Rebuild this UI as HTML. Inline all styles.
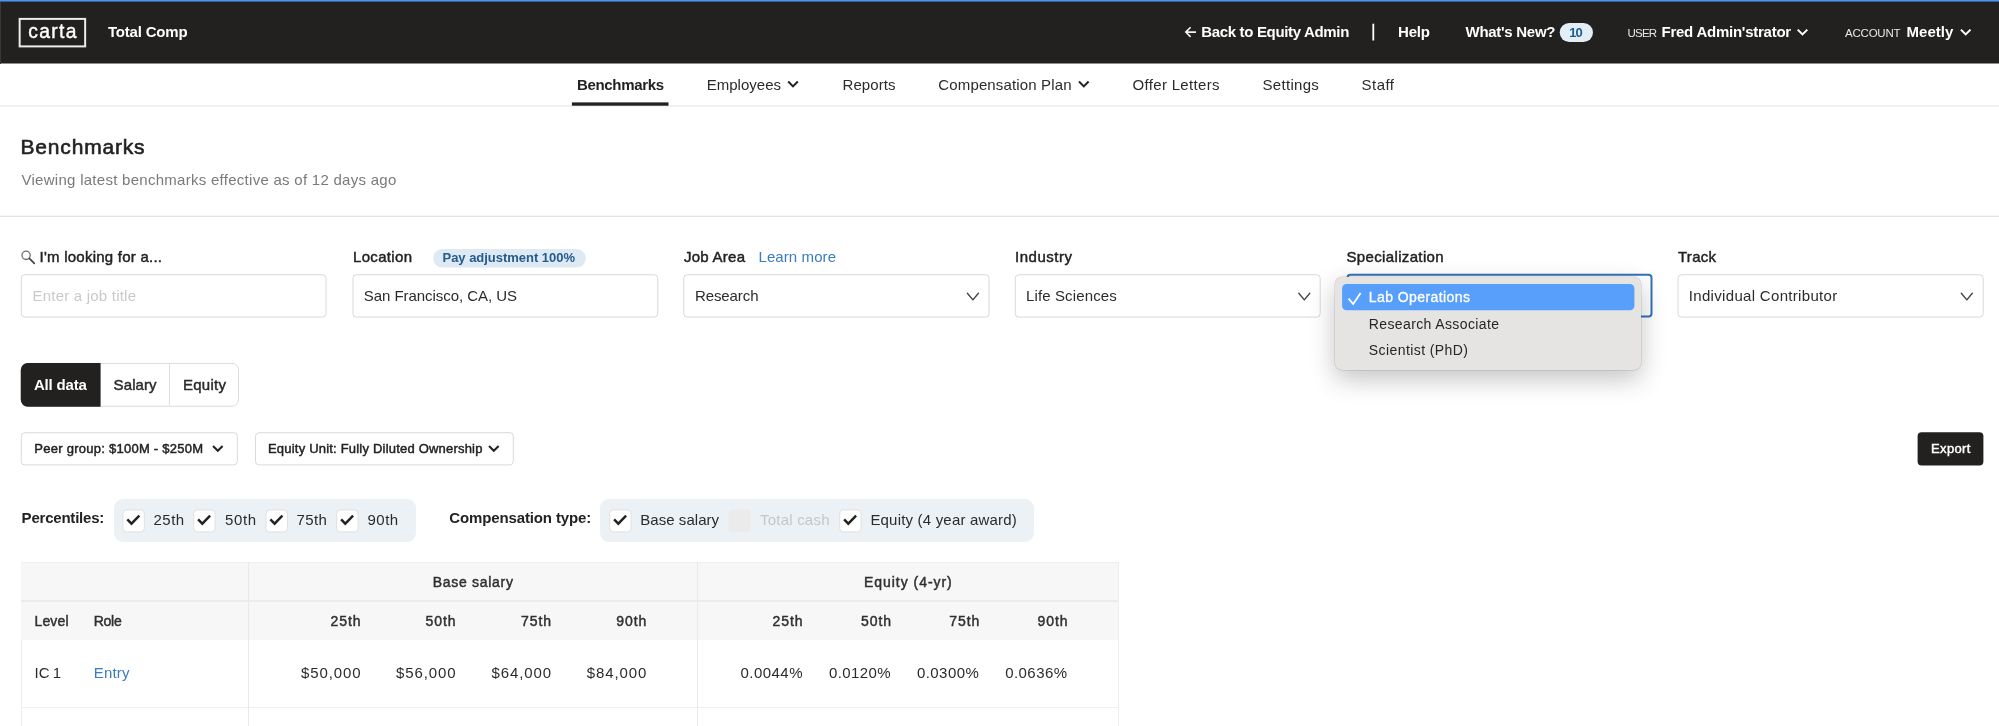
<!DOCTYPE html>
<html lang="en"><head><meta charset="utf-8"><title>Benchmarks - Total Comp</title>
<style>
html,body{margin:0;padding:0;background:#fff;}
body{width:1999px;height:726px;overflow:hidden;font-family:"Liberation Sans",sans-serif;}
#page{will-change:transform;position:relative;width:1999px;height:726px;overflow:hidden;background:#fff;}
.t{position:absolute;white-space:nowrap;margin:0;padding:0;}
.b{position:absolute;box-sizing:border-box;}
svg{position:absolute;overflow:visible;}

</style></head>
<body>
<div id="page">
<!-- top bar -->
<div class="b" style="left:0;top:0;width:1999px;height:63px;background:#222120;"></div>
<div class="b" style="left:0;top:63px;width:1999px;height:1px;background:#8f8e8e;"></div>
<div class="b" style="left:0;top:0;width:1999px;height:1px;background:#4a96ee;"></div>
<div class="b" style="left:0;top:1px;width:1999px;height:1px;background:#345f97;"></div>
<div class="b" style="left:0;top:2px;width:1px;height:62px;background:#3a3836;"></div>
<div class="b" style="left:0;top:105px;width:1999px;height:1px;background:#efefef;"></div>
<div class="b" style="left:0;top:106px;width:1999px;height:1px;background:#f3f3f3;"></div>
<div class="b" style="left:0;top:215px;width:1999px;height:1px;background:#f5f5f5;"></div>
<div class="b" style="left:0;top:216px;width:1999px;height:1px;background:#e4e4e4;"></div>
<div class="b" style="left:113.5px;top:499px;width:302px;height:42.5px;background:#ecf1f6;border-radius:9px;"></div>
<div class="b" style="left:600px;top:499px;width:434.3px;height:42.5px;background:#ecf1f6;border-radius:9px;"></div>
<div class="b" style="left:21px;top:562px;width:1097.5px;height:78px;background:#f7f7f7;border-top:1px solid #efefef;"></div>
<div class="b" style="left:21px;top:600px;width:1097.5px;height:2px;background:#ebebeb;"></div>
<div class="b" style="left:21px;top:706.5px;width:1097.5px;height:1px;background:#f0f0f0;"></div>
<div class="b" style="left:20.5px;top:640px;width:1px;height:86px;background:#efefef;"></div>
<div class="b" style="left:248px;top:562px;width:1px;height:164px;background:#e9e9e9;"></div>
<div class="b" style="left:697px;top:562px;width:1px;height:164px;background:#e9e9e9;"></div>
<div class="b" style="left:1118px;top:562px;width:1px;height:164px;background:#eeeeee;"></div>
<svg style="left:0;top:0;" width="1999" height="726" viewBox="0 0 1999 726">
<rect x="19.65" y="18.90" width="65.50" height="27.50" rx="0" fill="none" stroke="#ececec" stroke-width="2"/>
<rect x="1372.4" y="23.7" width="1.8" height="16.8" fill="#fff"/>
<rect x="1559.7" y="23" width="33.3" height="19" rx="9.5" fill="#e3eef6"/>
<rect x="433.25" y="249" width="152.5" height="18.6" rx="9.3" fill="#deeaf3"/>
<rect x="571.9" y="102.4" width="96.6" height="3.3" fill="#222120"/>
<rect x="21.25" y="274.75" width="304.75" height="42.35" rx="3.5" fill="#fff" stroke="#d8d8d8" stroke-width="1"/>
<rect x="353.00" y="274.75" width="304.75" height="42.35" rx="3.5" fill="#fff" stroke="#d8d8d8" stroke-width="1"/>
<rect x="683.75" y="274.75" width="305.25" height="42.35" rx="3.5" fill="#fff" stroke="#d8d8d8" stroke-width="1"/>
<rect x="1015.25" y="274.75" width="304.95" height="42.35" rx="3.5" fill="#fff" stroke="#d8d8d8" stroke-width="1"/>
<rect x="1678.00" y="274.75" width="305.20" height="42.35" rx="3.5" fill="#fff" stroke="#d8d8d8" stroke-width="1"/>
<rect x="1347.50" y="274.80" width="304.00" height="41.80" rx="3" fill="#fff" stroke="#3472ba" stroke-width="2"/>
<rect x="21.25" y="363.40" width="217.25" height="42.85" rx="6.5" fill="#fff" stroke="#dcdcdc" stroke-width="1"/>
<path d="M100.6,362.9 L27.75,362.9 A7,7 0 0 0 20.75,369.9 L20.75,399.75 A7,7 0 0 0 27.75,406.75 L100.6,406.75 Z" fill="#222120"/>
<rect x="169.05" y="363.9" width="1" height="41.85" fill="#dedede"/>
<rect x="21.25" y="432.70" width="216.05" height="32.20" rx="3.5" fill="#fff" stroke="#dadada" stroke-width="1"/>
<rect x="255.50" y="432.70" width="257.80" height="32.20" rx="3.5" fill="#fff" stroke="#dadada" stroke-width="1"/>
<rect x="1917.6" y="432.2" width="65.8" height="33.3" rx="4" fill="#222120"/>
<rect x="122.90" y="510.00" width="21.40" height="21.90" rx="3.5" fill="#fff" stroke="#e0e0e0" stroke-width="1"/>
<rect x="193.70" y="510.00" width="21.40" height="21.90" rx="3.5" fill="#fff" stroke="#e0e0e0" stroke-width="1"/>
<rect x="266.00" y="510.00" width="21.40" height="21.90" rx="3.5" fill="#fff" stroke="#e0e0e0" stroke-width="1"/>
<rect x="336.70" y="510.00" width="21.40" height="21.90" rx="3.5" fill="#fff" stroke="#e0e0e0" stroke-width="1"/>
<rect x="609.70" y="510.00" width="21.40" height="21.90" rx="3.5" fill="#fff" stroke="#e0e0e0" stroke-width="1"/>
<rect x="839.70" y="510.00" width="21.40" height="21.90" rx="3.5" fill="#fff" stroke="#e0e0e0" stroke-width="1"/>
<rect x="728.4" y="509.5" width="22.2" height="22.9" rx="4" fill="#ebebeb"/>
</svg>
<div class="b" style="left:1334.7px;top:276.6px;width:306.7px;height:93.6px;background:#e5e4e3;border-radius:7px;box-shadow:0 0 0 0.5px rgba(0,0,0,0.16),0 9px 26px rgba(0,0,0,0.24);z-index:10;"></div>
<svg style="left:0;top:0;z-index:11;" width="1999" height="726"><rect x="1342.1" y="283.9" width="292.3" height="26.4" rx="4.5" fill="#579ffb"/></svg>
<svg style="left:0;top:0;" width="1999" height="726"><path d="M1797.70,29.65 L1802.50,34.45 L1807.30,29.65" fill="none" stroke="#fff" stroke-width="2" stroke-linecap="butt" stroke-linejoin="miter"/></svg>
<svg style="left:0;top:0;" width="1999" height="726"><path d="M1960.90,29.65 L1965.70,34.45 L1970.50,29.65" fill="none" stroke="#fff" stroke-width="2" stroke-linecap="butt" stroke-linejoin="miter"/></svg>
<svg style="left:0;top:0;" width="1999" height="726"><path d="M788.20,81.55 L793.00,86.35 L797.80,81.55" fill="none" stroke="#222" stroke-width="2" stroke-linecap="butt" stroke-linejoin="miter"/></svg>
<svg style="left:0;top:0;" width="1999" height="726"><path d="M1079.00,81.55 L1083.80,86.35 L1088.60,81.55" fill="none" stroke="#222" stroke-width="2" stroke-linecap="butt" stroke-linejoin="miter"/></svg>
<svg style="left:0;top:0;" width="1999" height="726"><path d="M213.00,445.95 L217.80,450.75 L222.60,445.95" fill="none" stroke="#222" stroke-width="2" stroke-linecap="butt" stroke-linejoin="miter"/></svg>
<svg style="left:0;top:0;" width="1999" height="726"><path d="M489.00,445.95 L493.80,450.75 L498.60,445.95" fill="none" stroke="#222" stroke-width="2" stroke-linecap="butt" stroke-linejoin="miter"/></svg>
<svg style="left:0;top:0;" width="1999" height="726"><path d="M967.40,293.20 L972.90,299.85 L978.40,293.20" fill="none" stroke="#444" stroke-width="1.4" stroke-linecap="round" stroke-linejoin="round"/></svg>
<svg style="left:0;top:0;" width="1999" height="726"><path d="M1298.80,293.20 L1304.30,299.85 L1309.80,293.20" fill="none" stroke="#444" stroke-width="1.4" stroke-linecap="round" stroke-linejoin="round"/></svg>
<svg style="left:0;top:0;" width="1999" height="726"><path d="M1961.30,293.20 L1966.80,299.85 L1972.30,293.20" fill="none" stroke="#444" stroke-width="1.4" stroke-linecap="round" stroke-linejoin="round"/></svg>
<svg style="left:0;top:0;" width="1999" height="726"><path d="M127.30,519.30 L131.50,523.70 L139.30,515.70" fill="none" stroke="#222" stroke-width="2.4" stroke-linecap="butt" stroke-linejoin="miter"/></svg>
<svg style="left:0;top:0;" width="1999" height="726"><path d="M198.10,519.30 L202.30,523.70 L210.10,515.70" fill="none" stroke="#222" stroke-width="2.4" stroke-linecap="butt" stroke-linejoin="miter"/></svg>
<svg style="left:0;top:0;" width="1999" height="726"><path d="M270.40,519.30 L274.60,523.70 L282.40,515.70" fill="none" stroke="#222" stroke-width="2.4" stroke-linecap="butt" stroke-linejoin="miter"/></svg>
<svg style="left:0;top:0;" width="1999" height="726"><path d="M341.10,519.30 L345.30,523.70 L353.10,515.70" fill="none" stroke="#222" stroke-width="2.4" stroke-linecap="butt" stroke-linejoin="miter"/></svg>
<svg style="left:0;top:0;" width="1999" height="726"><path d="M614.10,519.30 L618.30,523.70 L626.10,515.70" fill="none" stroke="#222" stroke-width="2.4" stroke-linecap="butt" stroke-linejoin="miter"/></svg>
<svg style="left:0;top:0;" width="1999" height="726"><path d="M844.10,519.30 L848.30,523.70 L856.10,515.70" fill="none" stroke="#222" stroke-width="2.4" stroke-linecap="butt" stroke-linejoin="miter"/></svg>
<svg style="left:0;top:0;" width="1999" height="726"><path d="M1196,32.1 L1186,32.1 M1190.6,27.3 L1185.8,32.1 L1190.6,36.9" fill="none" stroke="#f4f4f4" stroke-width="1.6" stroke-linecap="butt" stroke-linejoin="miter"/></svg>
<svg style="left:0;top:0;" width="1999" height="726"><circle cx="26.1" cy="255.35" r="4.15" fill="none" stroke="#6e6e6e" stroke-width="1.3"/><path d="M29.3,258.4 L34.3,263.3" stroke="#444" stroke-width="1.7" stroke-linecap="round"/></svg>
<svg style="left:0;top:0;z-index:12;" width="1999" height="726"><path d="M1348.6,298.6 L1353.2,304 L1360.6,292.9" fill="none" stroke="#fff" stroke-width="1.8" stroke-linecap="butt" stroke-linejoin="miter"/></svg>
<span class="t" style="left:28.20px;top:21.86px;font-size:19.3px;line-height:19.3px;letter-spacing:1.381px;color:#fff;font-weight:400;-webkit-text-stroke:0.4px currentColor;">carta</span>
<span class="t" style="left:108.00px;top:24.00px;font-size:15px;line-height:15px;letter-spacing:-0.199px;color:#fff;font-weight:700;">Total Comp</span>
<span class="t" style="left:1201.30px;top:24.00px;font-size:15px;line-height:15px;letter-spacing:-0.340px;color:#fff;font-weight:700;">Back to Equity Admin</span>
<span class="t" style="left:1398.00px;top:24.00px;font-size:15px;line-height:15px;letter-spacing:-0.172px;color:#fff;font-weight:700;">Help</span>
<span class="t" style="left:1465.50px;top:24.00px;font-size:15px;line-height:15px;letter-spacing:-0.275px;color:#fff;font-weight:700;">What&#x27;s New?</span>
<span class="t" style="left:1569.20px;top:25.70px;font-size:13px;line-height:13px;letter-spacing:-0.869px;color:#1f5c8e;font-weight:700;">10</span>
<span class="t" style="left:1627.50px;top:27.57px;font-size:11.5px;line-height:11.5px;letter-spacing:-0.784px;color:#e8e8e8;font-weight:400;">USER</span>
<span class="t" style="left:1661.50px;top:24.00px;font-size:15px;line-height:15px;letter-spacing:-0.245px;color:#fff;font-weight:700;">Fred Admin&#x27;strator</span>
<span class="t" style="left:1845.00px;top:27.57px;font-size:11.5px;line-height:11.5px;letter-spacing:-0.213px;color:#e8e8e8;font-weight:400;">ACCOUNT</span>
<span class="t" style="left:1906.60px;top:24.00px;font-size:15px;line-height:15px;letter-spacing:0.003px;color:#fff;font-weight:700;">Meetly</span>
<span class="t" style="left:577.00px;top:77.30px;font-size:15px;line-height:15px;letter-spacing:-0.339px;color:#222;font-weight:700;">Benchmarks</span>
<span class="t" style="left:706.75px;top:77.30px;font-size:15px;line-height:15px;letter-spacing:0.006px;color:#2b2b2b;font-weight:400;">Employees</span>
<span class="t" style="left:842.50px;top:77.30px;font-size:15px;line-height:15px;letter-spacing:0.078px;color:#2b2b2b;font-weight:400;">Reports</span>
<span class="t" style="left:938.30px;top:77.30px;font-size:15px;line-height:15px;letter-spacing:0.142px;color:#2b2b2b;font-weight:400;">Compensation Plan</span>
<span class="t" style="left:1132.50px;top:77.30px;font-size:15px;line-height:15px;letter-spacing:0.326px;color:#2b2b2b;font-weight:400;">Offer Letters</span>
<span class="t" style="left:1262.50px;top:77.30px;font-size:15px;line-height:15px;letter-spacing:0.300px;color:#2b2b2b;font-weight:400;">Settings</span>
<span class="t" style="left:1361.50px;top:77.30px;font-size:15px;line-height:15px;letter-spacing:0.477px;color:#2b2b2b;font-weight:400;">Staff</span>
<span class="t" style="left:20.50px;top:136.22px;font-size:21px;line-height:21px;letter-spacing:0.820px;color:#222;font-weight:400;-webkit-text-stroke:0.45px currentColor;-webkit-text-stroke:0.6px currentColor;">Benchmarks</span>
<span class="t" style="left:21.50px;top:172.30px;font-size:15px;line-height:15px;letter-spacing:0.275px;color:#7a7a7a;font-weight:400;">Viewing latest benchmarks effective as of 12 days ago</span>
<span class="t" style="left:39.50px;top:249.00px;font-size:15px;line-height:15px;letter-spacing:0.241px;color:#222;font-weight:400;-webkit-text-stroke:0.45px currentColor;">I&#x27;m looking for a...</span>
<span class="t" style="left:353.00px;top:249.00px;font-size:15px;line-height:15px;letter-spacing:0.326px;color:#222;font-weight:400;-webkit-text-stroke:0.45px currentColor;">Location</span>
<span class="t" style="left:442.50px;top:250.50px;font-size:13px;line-height:13px;letter-spacing:-0.025px;color:#255a8e;font-weight:700;">Pay adjustment 100%</span>
<span class="t" style="left:684.00px;top:249.00px;font-size:15px;line-height:15px;letter-spacing:0.254px;color:#222;font-weight:400;-webkit-text-stroke:0.45px currentColor;">Job Area</span>
<span class="t" style="left:758.50px;top:249.00px;font-size:15px;line-height:15px;letter-spacing:0.087px;color:#3a7cc0;font-weight:400;">Learn more</span>
<span class="t" style="left:1015.00px;top:249.00px;font-size:15px;line-height:15px;letter-spacing:0.520px;color:#222;font-weight:400;-webkit-text-stroke:0.45px currentColor;">Industry</span>
<span class="t" style="left:1346.50px;top:249.00px;font-size:15px;line-height:15px;letter-spacing:0.349px;color:#222;font-weight:400;-webkit-text-stroke:0.45px currentColor;">Specialization</span>
<span class="t" style="left:1678.00px;top:249.00px;font-size:15px;line-height:15px;letter-spacing:0.262px;color:#222;font-weight:400;-webkit-text-stroke:0.45px currentColor;">Track</span>
<span class="t" style="left:32.50px;top:288.00px;font-size:15px;line-height:15px;letter-spacing:0.215px;color:#c9c9c9;font-weight:400;">Enter a job title</span>
<span class="t" style="left:363.75px;top:288.00px;font-size:15px;line-height:15px;letter-spacing:-0.048px;color:#2b2b2b;font-weight:400;">San Francisco, CA, US</span>
<span class="t" style="left:695.00px;top:288.00px;font-size:15px;line-height:15px;letter-spacing:-0.100px;color:#2b2b2b;font-weight:400;">Research</span>
<span class="t" style="left:1026.00px;top:288.00px;font-size:15px;line-height:15px;letter-spacing:0.128px;color:#2b2b2b;font-weight:400;">Life Sciences</span>
<span class="t" style="left:1688.80px;top:288.00px;font-size:15px;line-height:15px;letter-spacing:0.317px;color:#2b2b2b;font-weight:400;">Individual Contributor</span>
<span class="t" style="left:1368.80px;top:290.25px;font-size:14px;line-height:14px;letter-spacing:0.420px;color:#fff;font-weight:400;z-index:12;-webkit-text-stroke:0.3px currentColor;">Lab Operations</span>
<span class="t" style="left:1368.80px;top:316.75px;font-size:14px;line-height:14px;letter-spacing:0.380px;color:#262626;font-weight:400;z-index:12;">Research Associate</span>
<span class="t" style="left:1368.80px;top:343.15px;font-size:14px;line-height:14px;letter-spacing:0.417px;color:#262626;font-weight:400;z-index:12;">Scientist (PhD)</span>
<span class="t" style="left:33.90px;top:377.20px;font-size:15px;line-height:15px;letter-spacing:-0.184px;color:#fff;font-weight:700;">All data</span>
<span class="t" style="left:113.60px;top:377.20px;font-size:15px;line-height:15px;letter-spacing:0.094px;color:#2b2b2b;font-weight:400;-webkit-text-stroke:0.45px currentColor;">Salary</span>
<span class="t" style="left:182.90px;top:377.20px;font-size:15px;line-height:15px;letter-spacing:0.279px;color:#2b2b2b;font-weight:400;-webkit-text-stroke:0.45px currentColor;">Equity</span>
<span class="t" style="left:34.30px;top:442.40px;font-size:13px;line-height:13px;letter-spacing:0.258px;color:#222;font-weight:400;-webkit-text-stroke:0.45px currentColor;">Peer group: $100M - $250M</span>
<span class="t" style="left:268.00px;top:442.40px;font-size:13px;line-height:13px;letter-spacing:0.201px;color:#222;font-weight:400;-webkit-text-stroke:0.45px currentColor;">Equity Unit: Fully Diluted Ownership</span>
<span class="t" style="left:1931.00px;top:442.40px;font-size:13px;line-height:13px;letter-spacing:0.364px;color:#fff;font-weight:400;-webkit-text-stroke:0.45px currentColor;">Export</span>
<span class="t" style="left:21.60px;top:510.00px;font-size:15px;line-height:15px;letter-spacing:-0.213px;color:#222;font-weight:700;">Percentiles:</span>
<span class="t" style="left:153.40px;top:512.00px;font-size:15px;line-height:15px;letter-spacing:0.532px;color:#2b2b2b;font-weight:400;">25th</span>
<span class="t" style="left:225.00px;top:512.00px;font-size:15px;line-height:15px;letter-spacing:0.599px;color:#2b2b2b;font-weight:400;">50th</span>
<span class="t" style="left:296.60px;top:512.00px;font-size:15px;line-height:15px;letter-spacing:0.366px;color:#2b2b2b;font-weight:400;">75th</span>
<span class="t" style="left:367.40px;top:512.00px;font-size:15px;line-height:15px;letter-spacing:0.532px;color:#2b2b2b;font-weight:400;">90th</span>
<span class="t" style="left:449.20px;top:510.00px;font-size:15px;line-height:15px;letter-spacing:-0.123px;color:#222;font-weight:700;">Compensation type:</span>
<span class="t" style="left:640.30px;top:512.00px;font-size:15px;line-height:15px;letter-spacing:0.043px;color:#2b2b2b;font-weight:400;">Base salary</span>
<span class="t" style="left:760.00px;top:512.00px;font-size:15px;line-height:15px;letter-spacing:0.217px;color:#c6c6c6;font-weight:400;">Total cash</span>
<span class="t" style="left:870.40px;top:512.00px;font-size:15px;line-height:15px;letter-spacing:0.192px;color:#2b2b2b;font-weight:400;">Equity (4 year award)</span>
<span class="t" style="left:432.75px;top:574.90px;font-size:14px;line-height:14px;letter-spacing:0.709px;color:#303030;font-weight:400;-webkit-text-stroke:0.45px currentColor;">Base salary</span>
<span class="t" style="left:864.00px;top:574.90px;font-size:14px;line-height:14px;letter-spacing:0.960px;color:#303030;font-weight:400;-webkit-text-stroke:0.45px currentColor;">Equity (4-yr)</span>
<span class="t" style="left:34.50px;top:614.40px;font-size:14px;line-height:14px;letter-spacing:0.133px;color:#303030;font-weight:400;-webkit-text-stroke:0.45px currentColor;">Level</span>
<span class="t" style="left:93.75px;top:614.40px;font-size:14px;line-height:14px;letter-spacing:-0.266px;color:#303030;font-weight:400;-webkit-text-stroke:0.45px currentColor;">Role</span>
<span class="t" style="left:330.50px;top:614.40px;font-size:14px;line-height:14px;letter-spacing:0.917px;color:#303030;font-weight:400;-webkit-text-stroke:0.45px currentColor;">25th</span>
<span class="t" style="left:425.60px;top:614.40px;font-size:14px;line-height:14px;letter-spacing:0.917px;color:#303030;font-weight:400;-webkit-text-stroke:0.45px currentColor;">50th</span>
<span class="t" style="left:521.00px;top:614.40px;font-size:14px;line-height:14px;letter-spacing:0.917px;color:#303030;font-weight:400;-webkit-text-stroke:0.45px currentColor;">75th</span>
<span class="t" style="left:616.25px;top:614.40px;font-size:14px;line-height:14px;letter-spacing:0.917px;color:#303030;font-weight:400;-webkit-text-stroke:0.45px currentColor;">90th</span>
<span class="t" style="left:772.50px;top:614.40px;font-size:14px;line-height:14px;letter-spacing:0.917px;color:#303030;font-weight:400;-webkit-text-stroke:0.45px currentColor;">25th</span>
<span class="t" style="left:861.00px;top:614.40px;font-size:14px;line-height:14px;letter-spacing:0.917px;color:#303030;font-weight:400;-webkit-text-stroke:0.45px currentColor;">50th</span>
<span class="t" style="left:949.25px;top:614.40px;font-size:14px;line-height:14px;letter-spacing:0.917px;color:#303030;font-weight:400;-webkit-text-stroke:0.45px currentColor;">75th</span>
<span class="t" style="left:1037.50px;top:614.40px;font-size:14px;line-height:14px;letter-spacing:0.917px;color:#303030;font-weight:400;-webkit-text-stroke:0.45px currentColor;">90th</span>
<span class="t" style="left:34.50px;top:665.30px;font-size:15px;line-height:15px;letter-spacing:0.000px;color:#2b2b2b;font-weight:400;word-spacing:-0.92px;">IC 1</span>
<span class="t" style="left:93.75px;top:665.30px;font-size:15px;line-height:15px;letter-spacing:0.184px;color:#3a7cc0;font-weight:400;">Entry</span>
<span class="t" style="left:301.00px;top:665.30px;font-size:15px;line-height:15px;letter-spacing:0.878px;color:#2b2b2b;font-weight:400;">$50,000</span>
<span class="t" style="left:396.00px;top:665.30px;font-size:15px;line-height:15px;letter-spacing:0.878px;color:#2b2b2b;font-weight:400;">$56,000</span>
<span class="t" style="left:491.50px;top:665.30px;font-size:15px;line-height:15px;letter-spacing:0.878px;color:#2b2b2b;font-weight:400;">$64,000</span>
<span class="t" style="left:586.75px;top:665.30px;font-size:15px;line-height:15px;letter-spacing:0.878px;color:#2b2b2b;font-weight:400;">$84,000</span>
<span class="t" style="left:740.50px;top:665.30px;font-size:15px;line-height:15px;letter-spacing:0.464px;color:#2b2b2b;font-weight:400;">0.0044%</span>
<span class="t" style="left:829.00px;top:665.30px;font-size:15px;line-height:15px;letter-spacing:0.397px;color:#2b2b2b;font-weight:400;">0.0120%</span>
<span class="t" style="left:917.00px;top:665.30px;font-size:15px;line-height:15px;letter-spacing:0.422px;color:#2b2b2b;font-weight:400;">0.0300%</span>
<span class="t" style="left:1005.25px;top:665.30px;font-size:15px;line-height:15px;letter-spacing:0.422px;color:#2b2b2b;font-weight:400;">0.0636%</span>
</div>
</body></html>
